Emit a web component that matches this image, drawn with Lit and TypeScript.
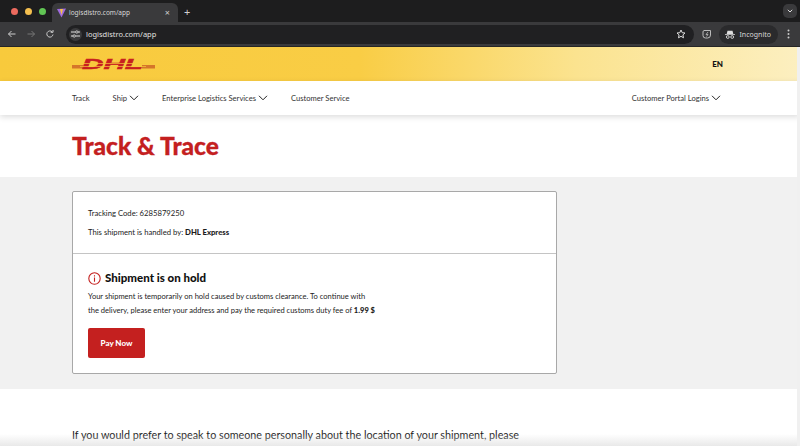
import { LitElement, html, css } from 'lit';
import { customElement } from 'lit/decorators.js';

const chevron = html`<svg class="chev" width="10" height="6" viewBox="0 0 10 6"><path d="M1 .8 5 4.8 9 .8" fill="none" stroke="#222" stroke-width="1"/></svg>`;

@customElement('app-root')
export class AppRoot extends LitElement {
  static styles = css`
    :host {
      display: block;
      height: 446px;
      overflow: hidden;
      position: relative;
      background: #fff;
      font-family: 'Lato', 'Noto Sans', sans-serif;
      color: #1c1c1c;
    }

    .tabstrip {
      height: 22px;
      background: #1d1d1e;
      display: flex;
      align-items: flex-end;
      padding-left: 11px;
      font-family: 'Noto Sans', sans-serif;
    }
    .lights {
      display: flex;
      gap: 7px;
      align-self: center;
      margin-right: 6px;
    }
    .lights i {
      width: 7px;
      height: 7px;
      border-radius: 50%;
    }
    .tab {
      width: 126px;
      height: 19px;
      box-sizing: border-box;
      background: #3a3a3c;
      border-radius: 6px 6px 0 0;
      display: flex;
      align-items: center;
      padding: 0 8px 0 5px;
      gap: 3px;
      font-size: 6.5px;
      color: #d8d8d8;
    }
    .tab .title { flex: 1; }
    .tab .x { color: #ccc; font-size: 9px; }
    .newtab {
      color: #cfcfcf;
      font-size: 11px;
      align-self: center;
      margin-left: 6px;
      line-height: 1;
    }
    .spacer { flex: 1; }
    .tabmenu {
      width: 14px;
      height: 14px;
      border-radius: 5px;
      background: #3a3a3c;
      align-self: center;
      margin-right: 3px;
      display: flex;
      align-items: center;
      justify-content: center;
    }

    .toolbar {
      height: 24px;
      background: #3a3a3c;
      border-bottom: 1px solid #262626;
      display: flex;
      align-items: center;
      padding-left: 7px;
      color: #d8d8d8;
      font-family: 'Noto Sans', sans-serif;
    }
    .toolbar .nav-ic { display: flex; gap: 9px; margin-right: 11px; }
    .omnibox {
      flex: 1;
      height: 19px;
      background: #202022;
      border-radius: 10px;
      display: flex;
      align-items: center;
      padding: 0 8px 0 3px;
      gap: 4px;
      font-size: 7.5px;
      color: #e0e0e0;
    }
    .tune {
      width: 13px;
      height: 13px;
      border-radius: 50%;
      background: #3a3a3c;
      display: flex;
      align-items: center;
      justify-content: center;
    }
    .right-ic { display: flex; align-items: center; margin-left: 8px; gap: 7px; }
    .incognito {
      height: 19px;
      border-radius: 10px;
      background: #2a2a2c;
      display: flex;
      align-items: center;
      gap: 5px;
      padding: 0 7px 0 6px;
      font-size: 7px;
      color: #d8d8d8;
    }
    .dots { margin: 0 10px 0 2px; }

    .brand {
      height: 34px;
      background: linear-gradient(90deg, #f8ca3c 0%, #f9cd45 45%, #fbe38f 72%, #fcefc0 100%);
      display: flex;
      align-items: center;
      padding: 0 77px 0 72px;
      justify-content: space-between;
    }
    .brand .lang { font-size: 8px; font-weight: 900; color: #111; }
    .logo { overflow: visible; display: block; }

    .mainnav {
      height: 34px;
      background: #fff;
      display: flex;
      align-items: center;
      padding: 0 79px 0 72px;
      font-size: 7.6px;
      color: #333;
      box-shadow: 0 2px 6px rgba(0, 0, 0, 0.14);
      position: relative;
    }
    .mainnav a {
      display: flex;
      align-items: center;
      gap: 2px;
    }
    .mainnav a + a { margin-left: 23px; }
    .mainnav .end { margin-left: auto; }
    .chev { display: block; }

    .heading {
      height: 62px;
      display: flex;
      align-items: center;
      padding-left: 72px;
    }
    h1 {
      margin: 0;
      font-size: 24.5px;
      line-height: 1;
      font-weight: 900;
      color: #c4201f;
      -webkit-text-stroke: 0.3px #c4201f;
    }

    .band {
      background: #f1f1f1;
      height: 212px;
      box-sizing: border-box;
      padding: 14px 0 0 72px;
    }
    .card {
      width: 485px;
      height: 183px;
      box-sizing: border-box;
      background: #fff;
      border: 1px solid #a8a8a8;
      border-radius: 2px;
    }
    .meta {
      height: 62px;
      box-sizing: border-box;
      border-bottom: 1px solid #c4c4c4;
      padding: 16px 15px 0;
      font-size: 7.7px;
      display: flex;
      flex-direction: column;
      gap: 8px;
      line-height: 11px;
    }
    .meta b, .status b { font-weight: 900; }
    .status { padding: 17px 15px 0; }
    .status h2 {
      margin: 0;
      font-size: 11.5px;
      line-height: 14px;
      font-weight: 900;
      color: #111;
      display: flex;
      align-items: center;
      gap: 4px;
    }
    .status p {
      margin: 5px 0 0;
      font-size: 7.56px;
      line-height: 14px;
    }
    button {
      display: block;
      margin-top: 10px;
      width: 57px;
      height: 30px;
      border: none;
      border-radius: 2px;
      background: #c4201f;
      color: #fff;
      font: 900 8px 'Lato', sans-serif;
      padding: 0;
    }

    .contact {
      margin: 0;
      padding: 39px 0 0 72px;
      font-size: 10.75px;
      line-height: 14px;
      white-space: nowrap;
      color: #1c1c1c;
    }
    .fade {
      position: absolute;
      left: 0;
      right: 0;
      bottom: 0;
      height: 12px;
      background: linear-gradient(180deg, rgba(225, 225, 225, 0), rgba(225, 225, 225, 0.75));
    }
    .scrollstrip {
      position: absolute;
      top: 47px;
      right: 0;
      bottom: 0;
      width: 3px;
      background: #f0f0f0;
    }
  `;

  private _logo() {
    return html`<svg class="logo" width="84" height="16" viewBox="0 0 84 16">
      <rect x="0" y="9" width="11" height="3.5" fill="#d5762a"/>
      <rect x="70" y="9" width="13" height="3.5" fill="#d5762a"/>
      <text x="10" y="13" textLength="61" lengthAdjust="spacingAndGlyphs" stroke="#c8201f" stroke-width=".5"
        font-family="'Liberation Sans'" font-size="15" font-weight="700" font-style="italic" fill="#c8201f">DHL</text>
      <rect x="8" y="7.2" width="66" height=".7" fill="#f8ca3c"/>
      <rect x="8" y="10" width="66" height=".7" fill="#f8ca3c"/>
    </svg>`;
  }

  render() {
    return html`
      <div class="tabstrip">
        <div class="lights">
          <i style="background:#ec6a5e"></i><i style="background:#f4bf4f"></i><i style="background:#61c554"></i>
        </div>
        <div class="tab">
          <svg width="9" height="10" viewBox="0 0 9 10">
            <path d="M0 1 9 .5 4.5 9.5Z" fill="#a06be0"/>
            <path d="M3 1h3L4.5 7Z" fill="#f6c445"/>
          </svg>
          <span class="title">logisdistro.com/app</span>
          <span class="x">×</span>
        </div>
        <span class="newtab">+</span>
        <div class="spacer"></div>
        <div class="tabmenu">
          <svg width="6" height="4" viewBox="0 0 6 4"><path d="M.8.8 3 3 5.2.8" fill="none" stroke="#ddd" stroke-width="1"/></svg>
        </div>
      </div>
      <div class="toolbar">
        <div class="nav-ic">
          <svg width="10" height="10" viewBox="0 0 10 10"><path d="M8.5 5H1.500M4.5 2 1.5 5 4.5 8" fill="none" stroke="#ccc" stroke-width="1"/></svg>
          <svg width="10" height="10" viewBox="0 0 10 10"><path d="M1.5 5H8.500M5.5 2 8.5 5 5.5 8" fill="none" stroke="#777" stroke-width="1"/></svg>
          <svg width="10" height="10" viewBox="0 0 10 10"><path d="M8 5.5A3.1 3.1 0 1 1 7.1 2.8M8 1v2.3H5.7" fill="none" stroke="#ccc" stroke-width="1"/></svg>
        </div>
        <div class="omnibox">
          <span class="tune">
            <svg width="9" height="8" viewBox="0 0 9 8"><path d="M0 2H4.5M7 2H9M0 6H2M4.5 6H9" stroke="#ddd" stroke-width="1"/><circle cx="5.8" cy="2" r="1.2" fill="none" stroke="#ddd" stroke-width=".8"/><circle cx="3.2" cy="6" r="1.2" fill="none" stroke="#ddd" stroke-width=".8"/></svg>
          </span>
          <span style="flex:1">logisdistro.com/app</span>
          <svg width="10" height="10" viewBox="0 0 10 10"><path d="M5 1 6.2 3.7 9 4 6.9 5.9 7.5 8.8 5 7.3 2.5 8.8 3.1 5.9 1 4 3.8 3.7Z" fill="none" stroke="#ddd" stroke-width="1"/></svg>
        </div>
        <div class="right-ic">
          <svg width="10" height="10" viewBox="0 0 10 10"><path d="M2 1.5H8.5V6A3 3 0 0 1 5.5 9H3.5A2.5 2.5 0 0 1 1 6.5V3A1.5 1.5 0 0 1 2 1.5Z" fill="none" stroke="#bbb" stroke-width="1"/><path d="M6 3 4 5.5H6L4.5 7.5" fill="none" stroke="#bbb" stroke-width=".8"/></svg>
          <div class="incognito">
            <svg width="10" height="9" viewBox="0 0 10 9"><path d="M2.5 .8H7.5L8.3 4H1.7ZM0 4.3H10V5H0Z" fill="#ddd"/><circle cx="2.8" cy="7" r="1.4" fill="none" stroke="#ddd" stroke-width=".9"/><circle cx="7.2" cy="7" r="1.4" fill="none" stroke="#ddd" stroke-width=".9"/></svg>
            Incognito
          </div>
          <svg class="dots" width="3" height="10" viewBox="0 0 3 10" fill="#ccc"><circle cx="1.5" cy="1.5" r="1"/><circle cx="1.5" cy="5" r="1"/><circle cx="1.5" cy="8.5" r="1"/></svg>
        </div>
      </div>

      <div class="brand">
        ${this._logo()}
        <span class="lang">EN</span>
      </div>
      <nav class="mainnav">
        <a>Track</a>
        <a>Ship ${chevron}</a>
        <a>Enterprise Logistics Services ${chevron}</a>
        <a>Customer Service</a>
        <a class="end">Customer Portal Logins ${chevron}</a>
      </nav>

      <div class="heading"><h1>Track &amp; Trace</h1></div>

      <section class="band">
        <div class="card">
          <div class="meta">
            <div>Tracking Code: 6285879250</div>
            <div>This shipment is handled by: <b>DHL Express</b></div>
          </div>
          <div class="status">
            <h2>
              <svg width="13" height="13" viewBox="0 0 13 13">
                <circle cx="6.5" cy="6.5" r="5.7" fill="none" stroke="#c4201f" stroke-width="1.1"/>
                <path d="M6.5 5.6V9.8M6.5 3.2V4.5" stroke="#c4201f" stroke-width="1.1"/>
              </svg>
              Shipment is on hold
            </h2>
            <p>
              Your shipment is temporarily on hold caused by customs clearance. To continue with<br />
              the delivery, please enter your address and pay the required customs duty fee of <b>1.99 $</b>
            </p>
            <button>Pay Now</button>
          </div>
        </div>
      </section>

      <p class="contact">If you would prefer to speak to someone personally about the location of your shipment, please</p>
      <div class="fade"></div>
      <div class="scrollstrip"></div>
    `;
  }
}
